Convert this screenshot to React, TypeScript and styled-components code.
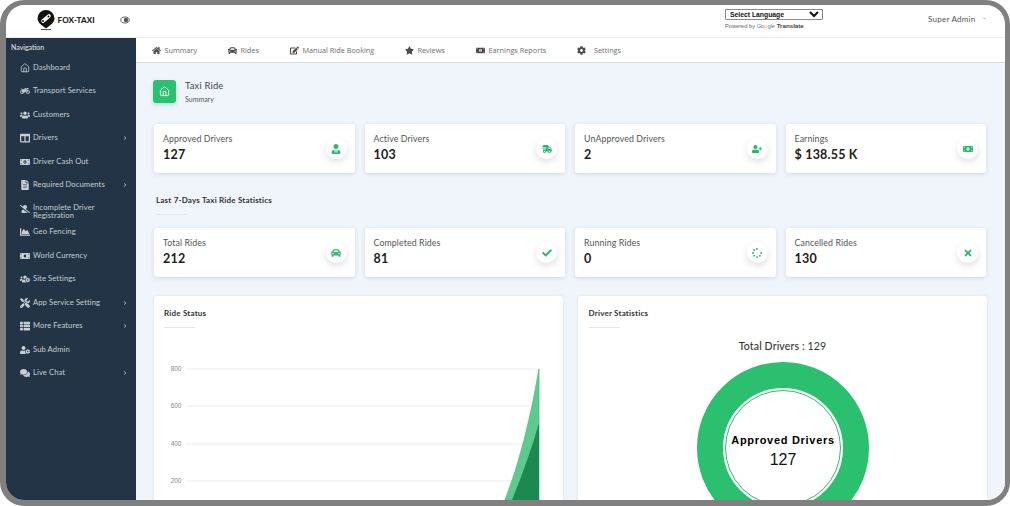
import React from "react";
import styled, { createGlobalStyle } from "styled-components";
import {
  FaHome,
  FaCar,
  FaEdit,
  FaStar,
  FaMoneyBill,
  FaMoneyBillAlt,
  FaCog,
  FaMotorcycle,
  FaUsers,
  FaColumns,
  FaFileAlt,
  FaUserSlash,
  FaChartArea,
  FaUsersCog,
  FaTools,
  FaThList,
  FaUserCog,
  FaComments,
  FaUserTie,
  FaShippingFast,
  FaUserPlus,
  FaCheck,
  FaSpinner,
  FaTimes,
  FaChevronRight,
  FaChevronDown,
} from "react-icons/fa";
import { LuHouse } from "react-icons/lu";

const GlobalStyle = createGlobalStyle`
  html, body {
    margin: 0;
    padding: 0;
    background: #fff;
    font-family: "Lato", "Open Sans", sans-serif;
  }
`;

const sideItems = [
  { label: "Dashboard", icon: <LuHouse /> },
  { label: "Transport Services", icon: <FaMotorcycle /> },
  { label: "Customers", icon: <FaUsers /> },
  { label: "Drivers", icon: <FaColumns />, more: true },
  { label: "Driver Cash Out", icon: <FaMoneyBillAlt /> },
  { label: "Required Documents", icon: <FaFileAlt />, more: true },
  { label: "Incomplete Driver Registration", icon: <FaUserSlash />, wrapped: true },
  { label: "Geo Fencing", icon: <FaChartArea /> },
  { label: "World Currency", icon: <FaMoneyBill /> },
  { label: "Site Settings", icon: <FaUsersCog /> },
  { label: "App Service Setting", icon: <FaTools />, more: true },
  { label: "More Features", icon: <FaThList />, more: true },
  { label: "Sub Admin", icon: <FaUserCog /> },
  { label: "Live Chat", icon: <FaComments />, more: true },
];

const tabs = [
  { label: "Summary", icon: <FaHome />, width: 76, gap: 3.5 },
  { label: "Rides", icon: <FaCar />, width: 62, gap: 3.5 },
  { label: "Manual Ride Booking", icon: <FaEdit />, width: 115, gap: 3.5 },
  { label: "Reviews", icon: <FaStar />, width: 71, gap: 3.5 },
  { label: "Earnings Reports", icon: <FaMoneyBillAlt />, width: 101, gap: 3.5 },
  { label: "Settings", icon: <FaCog />, width: 60, gap: 8 },
];

const topStats = [
  { label: "Approved Drivers", value: "127", icon: <FaUserTie /> },
  { label: "Active Drivers", value: "103", icon: <FaShippingFast /> },
  { label: "UnApproved Drivers", value: "2", icon: <FaUserPlus /> },
  { label: "Earnings", value: "$ 138.55 K", icon: <FaMoneyBillAlt /> },
];

const rideStats = [
  { label: "Total Rides", value: "212", icon: <FaCar /> },
  { label: "Completed Rides", value: "81", icon: <FaCheck /> },
  { label: "Running Rides", value: "0", icon: <FaSpinner /> },
  { label: "Cancelled Rides", value: "130", icon: <FaTimes /> },
];

const gridLines = [
  { label: "800", y: 73 },
  { label: "600", y: 110 },
  { label: "400", y: 148 },
  { label: "200", y: 185 },
];

const Frame = styled.div`
  width: 1010px;
  height: 506px;
  box-sizing: border-box;
  border-style: solid;
  border-color: #808080;
  border-width: 5px 5px 6px 6px;
  border-radius: 24px;
  overflow: hidden;
  display: flex;
  flex-direction: column;
  background: #fff;
`;

const Header = styled.header`
  height: 33px;
  flex-shrink: 0;
  display: flex;
  align-items: center;
  box-sizing: border-box;
  border-bottom: 1px solid #ececec;
`;

const Brand = styled.div`
  width: 111px;
  margin: -2px 0 0 31px;
  display: flex;
  align-items: center;
  gap: 2.5px;
  color: #222;
  font-size: 8px;
  font-weight: 900;
  letter-spacing: 0.15px;
`;

const Toggle = styled.svg`
  width: 10px;
  height: 8px;
  margin: -2px 0 0 -28px;
`;

const Language = styled.div`
  margin: -4px 0 0 595px;
  width: 212px;
`;

const LangSelect = styled.select`
  display: block;
  width: 98px;
  height: 10.5px;
  padding: 0;
  font-family: "Liberation Sans", sans-serif;
  font-size: 6.8px;
  line-height: 8px;
  font-weight: 700;
  color: #111;
  background: #fff;
  border: 1px solid #8a8a8a;
  border-radius: 1px;
`;

const Powered = styled.div`
  margin-top: 2.5px;
  font-family: "Liberation Sans", sans-serif;
  font-size: 5.7px;
  color: #666;
  strong {
    color: #444;
    font-size: 6.2px;
  }
`;

const GoogleLetter = styled.span<{ $color: string }>`
  color: ${(p) => p.$color};
`;

const UserMenu = styled.div`
  display: flex;
  align-items: center;
  gap: 8px;
  margin-top: -5px;
  margin-left: -9px;
  font-size: 8px;
  color: #555;
  letter-spacing: 0.25px;
  svg {
    font-size: 3px;
    color: #777;
  }
`;

const Body = styled.div`
  flex: 1;
  min-height: 0;
  display: flex;
`;

const Sidebar = styled.aside`
  width: 130px;
  flex-shrink: 0;
  background: #233446;
  color: #c6ced6;
`;

const NavHeading = styled.div`
  padding: 5px 0 0 5px;
  height: 13px;
  font-size: 7px;
  line-height: 9px;
  color: #e6ebef;
`;

const SideItem = styled.div`
  height: 23.5px;
  display: flex;
  align-items: center;
  padding: 0 9px 0 13.5px;
  font-size: 7.6px;
  line-height: 7.8px;
  letter-spacing: 0.1px;
  > svg:first-child {
    width: 10px;
    height: 10px;
    flex-shrink: 0;
    margin-right: 3.5px;
  }
`;

const SideLabel = styled.span<{ $wrapped?: boolean }>`
  flex: 1;
  padding-top: ${(p) => (p.$wrapped ? "7px" : "0")};
`;

const Chevron = styled(FaChevronRight)`
  width: 4px;
  height: 4px;
  color: #aeb8c2;
`;

const Main = styled.main`
  flex: 1;
  min-width: 0;
  background: #f0f5fc;
  overflow: hidden;
`;

const Tabs = styled.nav`
  height: 25px;
  box-sizing: border-box;
  display: flex;
  align-items: center;
  padding-left: 16px;
  background: #fff;
  border-bottom: 1px solid #dcdcdc;
`;

const Tab = styled.div<{ $width: number; $gap: number }>`
  width: ${(p) => p.$width}px;
  display: flex;
  align-items: center;
  gap: ${(p) => p.$gap}px;
  font-family: "Open Sans", sans-serif;
  font-size: 7.3px;
  color: #6e6e6e;
  svg {
    width: 9px;
    height: 9px;
    color: #4b4b4b;
  }
`;

const Content = styled.div`
  padding: 16px 19px 0 18px;
`;

const PageTitle = styled.div`
  display: flex;
  align-items: center;
  gap: 9px;
  height: 25px;
`;

const TitleIcon = styled.div`
  width: 23px;
  height: 23px;
  margin-left: -1px;
  border-radius: 3px;
  background: #2bc06f;
  color: #fff;
  display: flex;
  align-items: center;
  justify-content: center;
  box-shadow: 0 2px 4px rgba(43, 192, 111, 0.3);
  svg {
    width: 11px;
    height: 11px;
  }
`;

const TitleText = styled.div`
  margin-top: 1px;
`;

const TitleMain = styled.div`
  font-size: 9.4px;
  line-height: 12px;
  color: #444;
  letter-spacing: 0.2px;
`;

const TitleSub = styled.div`
  margin-top: 3px;
  font-size: 7px;
  line-height: 9px;
  color: #555;
`;

const StatGrid = styled.div`
  display: grid;
  grid-template-columns: repeat(4, 1fr);
  gap: 10px;
`;

const FirstStats = styled(StatGrid)`
  margin-top: 20px;
`;

const StatCard = styled.div`
  height: 48.75px;
  box-sizing: border-box;
  display: flex;
  align-items: center;
  justify-content: space-between;
  padding: 0 8px 0 9px;
  background: #fff;
  border-radius: 3px;
  box-shadow: 0 1px 4px rgba(60, 70, 90, 0.16);
`;

const StatLabel = styled.div`
  font-size: 8.8px;
  line-height: 11px;
  color: #555;
  letter-spacing: 0.1px;
`;

const StatValue = styled.div`
  margin-top: 3px;
  font-size: 12.5px;
  line-height: 16px;
  font-weight: 700;
  color: #1d1d1d;
  letter-spacing: 0.2px;
`;

const StatIcon = styled.div`
  width: 21px;
  height: 21px;
  margin-top: 1px;
  border-radius: 50%;
  background: #fff;
  color: #2bb673;
  display: flex;
  align-items: center;
  justify-content: center;
  box-shadow: 0 3px 7px rgba(60, 70, 90, 0.16);
  svg {
    width: 10px;
    height: 10px;
  }
`;

const SectionTitle = styled.div`
  margin: 22px 0 0 2px;
  font-size: 8px;
  line-height: 11px;
  font-weight: 700;
  color: #333;
  letter-spacing: 0.2px;
`;

const Rule = styled.div`
  width: 31px;
  height: 1px;
  background: #e4e6ea;
  margin-top: 8px;
`;

const SecondStats = styled(StatGrid)`
  margin-top: 13px;
`;

const Panels = styled.div`
  display: grid;
  grid-template-columns: minmax(0, 1fr) minmax(0, 1fr);
  gap: 15.5px;
  margin: 19px -1px 0 -0.5px;
`;

const Panel = styled.section`
  height: 260px;
  box-sizing: border-box;
  padding: 12px 10.5px 0;
  background: #fff;
  border-radius: 3px;
  box-shadow: 0 0 3px rgba(60, 70, 90, 0.12);
`;

const PanelTitle = styled.div`
  font-size: 8px;
  line-height: 11px;
  font-weight: 700;
  color: #333;
  letter-spacing: 0.2px;
`;

const PanelRule = styled(Rule)`
  margin-top: 8.5px;
`;

const Chart = styled.svg`
  display: block;
  width: 409px;
  height: 210px;
  margin: -32.5px 0 0 -10.5px;
`;

const AxisLabel = styled.text`
  font-family: "Liberation Sans", sans-serif;
  font-size: 6.5px;
  fill: #8a8a8a;
`;

const DriverTotal = styled.div`
  margin-top: 10.5px;
  text-align: center;
  font-size: 10.5px;
  line-height: 14px;
  font-weight: 500;
  color: #333;
  letter-spacing: 0.15px;
  span {
    font-weight: 400;
  }
`;

const Donut = styled.svg`
  display: block;
  width: 176px;
  height: 176px;
  margin: 7.5px auto 0;
`;

const DonutTitle = styled.text`
  font-family: "Liberation Sans", sans-serif;
  font-size: 11px;
  font-weight: 700;
  letter-spacing: 0.7px;
  fill: #000;
`;

const DonutValue = styled.text`
  font-family: "Liberation Sans", sans-serif;
  font-size: 16px;
  fill: #111;
`;

const Stat = ({ item }: { item: { label: string; value: string; icon: React.ReactNode } }) => (
  <StatCard>
    <div>
      <StatLabel>{item.label}</StatLabel>
      <StatValue>{item.value}</StatValue>
    </div>
    <StatIcon>{item.icon}</StatIcon>
  </StatCard>
);

const Logo = () => (
  <svg width="18" height="20" viewBox="0 0 18 20">
    <path d="M9 0a8.500 8.500 0 0 1 8.500 8.500c0 4-4.500 7-8.500 10C5 15.500.5 12.500.5 8.500A8.500 8.500 0 0 1 9 0z" fill="#111" />
    <path d="M6 11L12 6" stroke="#fff" strokeWidth="3.600" strokeLinecap="round" />
    <circle cx="6" cy="11" r="1" fill="#111" />
    <circle cx="11.500" cy="6.500" r="1" fill="#111" />
    <rect x="4" y="19" width="10" height="1" fill="#555" />
  </svg>
);

const App = () => (
  <>
    <GlobalStyle />
    <Frame>
      <Header>
        <Brand>
          <Logo />
          FOX-TAXI
        </Brand>
        <Toggle viewBox="0 0 10 8">
          <ellipse cx="5" cy="4" rx="4.200" ry="3" fill="none" stroke="#666" strokeWidth="1" />
          <circle cx="6" cy="4" r="2.200" fill="#555" />
        </Toggle>
        <Language>
          <LangSelect defaultValue="">
            <option value="">Select Language</option>
          </LangSelect>
          <Powered>
            Powered by{" "}
            <GoogleLetter $color="#4285f4">G</GoogleLetter>
            <GoogleLetter $color="#ea4335">o</GoogleLetter>
            <GoogleLetter $color="#fbbc05">o</GoogleLetter>
            <GoogleLetter $color="#4285f4">g</GoogleLetter>
            <GoogleLetter $color="#34a853">l</GoogleLetter>
            <GoogleLetter $color="#ea4335">e</GoogleLetter>{" "}
            <strong>Translate</strong>
          </Powered>
        </Language>
        <UserMenu>
          Super Admin
          <FaChevronDown />
        </UserMenu>
      </Header>
      <Body>
        <Sidebar>
          <NavHeading>Navigation</NavHeading>
          {sideItems.map((item) => (
            <SideItem key={item.label}>
              {item.icon}
              <SideLabel $wrapped={item.wrapped}>{item.label}</SideLabel>
              {item.more && <Chevron />}
            </SideItem>
          ))}
        </Sidebar>
        <Main>
          <Tabs>
            {tabs.map((tab) => (
              <Tab key={tab.label} $width={tab.width} $gap={tab.gap}>
                {tab.icon}
                {tab.label}
              </Tab>
            ))}
          </Tabs>
          <Content>
            <PageTitle>
              <TitleIcon>
                <LuHouse />
              </TitleIcon>
              <TitleText>
                <TitleMain>Taxi Ride</TitleMain>
                <TitleSub>Summary</TitleSub>
              </TitleText>
            </PageTitle>
            <FirstStats>
              {topStats.map((item) => (
                <Stat key={item.label} item={item} />
              ))}
            </FirstStats>
            <SectionTitle>
              Last 7-Days Taxi Ride Statistics
              <Rule />
            </SectionTitle>
            <SecondStats>
              {rideStats.map((item) => (
                <Stat key={item.label} item={item} />
              ))}
            </SecondStats>
            <Panels>
              <Panel>
                <PanelTitle>Ride Status</PanelTitle>
                <PanelRule />
                <Chart viewBox="0 0 409 210">
                  {gridLines.map((line) => (
                    <g key={line.label}>
                      <AxisLabel x="27.500" y={line.y + 2.3} textAnchor="end">
                        {line.label}
                      </AxisLabel>
                      <line x1="33" x2="386" y1={line.y} y2={line.y} stroke="#ececef" strokeWidth="1" />
                    </g>
                  ))}
                  <path d="M351 204 Q372 150 385 73 V204 Z" fill="#5fca90" stroke="#3fb878" strokeWidth="0.700" />
                  <path d="M358 204 Q374 165 385 127 V204 Z" fill="#1c8a50" />
                </Chart>
              </Panel>
              <Panel>
                <PanelTitle>Driver Statistics</PanelTitle>
                <PanelRule />
                <DriverTotal>
                  Total Drivers : <span>129</span>
                </DriverTotal>
                <Donut viewBox="0 0 176 176">
                  <circle cx="88" cy="88" r="73" fill="none" stroke="#2bc06f" strokeWidth="26" />
                  <circle cx="88" cy="88" r="57.500" fill="none" stroke="#2bc06f" strokeWidth="1" />
                  <DonutTitle x="88" y="84" textAnchor="middle">
                    Approved Drivers
                  </DonutTitle>
                  <DonutValue x="88" y="105" textAnchor="middle">
                    127
                  </DonutValue>
                </Donut>
              </Panel>
            </Panels>
          </Content>
        </Main>
      </Body>
    </Frame>
  </>
);

export default App;
